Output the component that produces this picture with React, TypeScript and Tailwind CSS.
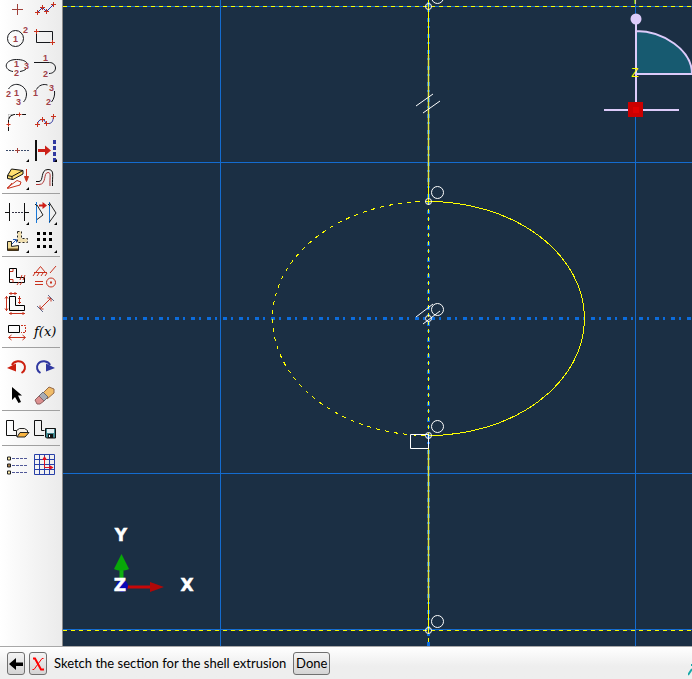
import type { ReactNode } from "react";

interface Tool {
  label: string;
  icon: ReactNode;
  menu?: boolean;
}

const RED = "#c8321e";
const RUST = "#a0403a";
const INK = "#16181c";
const BLUE = "#3038a0";

function Plus({ x, y, r = 2, color = RED }: { x: number; y: number; r?: number; color?: string }) {
  return <path d={`M${x - r} ${y}h${r * 2}M${x} ${y - r}v${r * 2}`} stroke={color} />;
}

function Num({ x, y, children }: { x: number; y: number; children: ReactNode }) {
  return (
    <text
      x={x}
      y={y}
      className="fill-[#a04048] font-['Liberation_Sans',sans-serif] text-[9px] font-bold"
      stroke="none"
    >
      {children}
    </text>
  );
}

const groups: Tool[][] = [
  [
    { label: "Create isolated point", icon: <Plus x={14.5} y={13.5} r={5.5} color={RUST} /> },
    {
      label: "Create connected lines",
      icon: (
        <>
          <path d="M6.5 16.5L11.5 11.5L15.5 15.5L22.5 8.5" stroke={BLUE} />
          <Plus x={6.5} y={16.5} r={2.5} />
          <Plus x={11.5} y={11.5} r={2.5} />
          <Plus x={15.5} y={15.5} r={2.5} />
          <Plus x={22.5} y={8.5} r={2.5} />
        </>
      ),
    },
    {
      label: "Create circle",
      icon: (
        <>
          <circle cx="12.5" cy="14.5" r="8" stroke={INK} />
          <Num x={10} y={18}>1</Num>
          <Num x={20} y={9}>2</Num>
        </>
      ),
    },
    {
      label: "Create rectangle",
      icon: (
        <>
          <path d="M5.5 7.5h16v11h-16z" stroke={INK} />
          <Plus x={5.5} y={7.5} r={2.5} />
          <Plus x={21.5} y={18.5} r={2.5} />
        </>
      ),
    },
    {
      label: "Create ellipse",
      icon: (
        <>
          <path d="M10 19.5C0 18 1 7.5 13.5 7.5C20 7.5 23 9.5 24 11M17 19.5C20 19 22 18 23 17" stroke={INK} />
          <Num x={11} y={15}>1</Num>
          <Num x={11} y={24}>2</Num>
          <Num x={21} y={17}>3</Num>
        </>
      ),
    },
    {
      label: "Create tangent arc",
      icon: (
        <>
          <path d="M3 10.5H18.5C22 10.5 24.5 13 24.5 16C24.5 19 22 21.5 18 21.5" stroke={INK} />
          <Num x={12} y={9}>1</Num>
          <Num x={12} y={25}>2</Num>
        </>
      ),
    },
    {
      label: "Create arc by center",
      icon: (
        <>
          <path d="M5.5 9C8 5 12 4 15 4.5C20 5.5 23.5 9.5 23.5 14C23.5 17 22.5 20 20.5 22" stroke={INK} />
          <Num x={3} y={17}>2</Num>
          <Num x={11} y={16}>1</Num>
          <Num x={13} y={25}>3</Num>
        </>
      ),
    },
    {
      label: "Create arc by 3 points",
      icon: (
        <>
          <path d="M5.5 9.5C7.5 5.5 12 3.5 16.5 5M23.5 11C24 15 23 19 20.5 22" stroke={INK} />
          <Num x={2} y={16}>1</Num>
          <Num x={18} y={11}>3</Num>
          <Num x={15} y={25}>2</Num>
        </>
      ),
    },
    {
      label: "Create fillet",
      icon: (
        <>
          <path d="M5.5 10.5v-4h4" stroke="#aaa" strokeDasharray="2 1" />
          <path d="M5.5 11.5Q6.5 7 11 6.5H23" stroke="#111" strokeDasharray="9 1 4 2" />
          <path d="M5.5 12v11" stroke="#111" strokeDasharray="6 1" />
          <Plus x={16.5} y={6.5} />
          <Plus x={5.5} y={16.5} />
        </>
      ),
    },
    {
      label: "Create spline",
      icon: (
        <>
          <path d="M6.5 16.5Q7 11.5 11.5 11.5C15 11.5 13 15.5 16.5 15.5C21 16 22 13 22.5 8.5" stroke={BLUE} />
          <Plus x={6.5} y={16.5} r={2.5} />
          <Plus x={11.5} y={11.5} r={2.5} />
          <Plus x={15.5} y={15.5} r={2.5} />
          <Plus x={22.5} y={8.5} r={2.5} />
        </>
      ),
    },
    {
      label: "Create construction line",
      menu: true,
      icon: (
        <>
          <path d="M3 14.5h24" stroke="#3a4a6a" strokeDasharray="2 1" />
          <Plus x={14.5} y={14.5} r={2.5} color={RUST} />
        </>
      ),
    },
    {
      label: "Project edges",
      menu: true,
      icon: (
        <>
          <path d="M5 4v21" stroke="#111" strokeWidth="2" />
          <path d="M7 14.5h8" stroke="#cc2018" strokeWidth="3" />
          <path d="M14 9.5l6 5l-6 5z" fill="#cc2018" />
          <path d="M23.5 4v22" stroke={BLUE} strokeWidth="3" strokeDasharray="4 2" />
        </>
      ),
    },
    {
      label: "Offset curves",
      menu: true,
      icon: (
        <>
          <path d="M4.5 11.5L8.5 5L20 6.5V10L10 15.5L4.5 14.5z" fill="#ffe070" stroke="#111" />
          <path d="M4.5 11.5L9 12.5L20 6.5M9 12.5v3" stroke="#111" />
          <path d="M4 24L14 16.5L18 18L17 21L4.5 24.5L9 19" stroke={RED} />
          <path d="M23.5 5v9M21.5 12.5h4l-2 5z" fill={RED} stroke={RED} />
        </>
      ),
    },
    {
      label: "Offset wire",
      icon: (
        <>
          <path d="M5 17.5H8C13 17.5 9 5.5 17 5.5C24 5.5 21 12 21.5 22" stroke="#111" />
          <path d="M5 20.5H8C16 20.5 12 8.5 17 8.5C20.5 8.5 18.5 13 19 22" stroke="#b03838" />
        </>
      ),
    },
  ],
  [
    {
      label: "Auto-trim",
      menu: true,
      icon: (
        <>
          <path d="M6.5 4v18M21.5 4v18M2 13.5h5M21 13.5h5" stroke="#111" />
          <path d="M9 13.5h11" stroke="#334" strokeDasharray="2 1" />
        </>
      ),
    },
    {
      label: "Mirror and copy",
      menu: true,
      icon: (
        <>
          <path d="M5.5 3v21M18.5 3v21" stroke="#1878d8" />
          <path d="M6 6L12 16L6 20.5M18.5 4L25 14L18.5 23M4 5l2 2M17 5l2 2" stroke="#222" />
          <path d="M8 6.5h4" stroke="#d02018" strokeWidth="2" />
          <path d="M11.5 3l4.5 3.5l-4.5 3.5z" fill="#d02018" />
        </>
      ),
    },
    {
      label: "Linear move",
      menu: true,
      icon: (
        <>
          <path d="M14.5 4.5h4v7h6v4h-10z" fill="#f0dfb0" stroke="#222" strokeDasharray="2 2" />
          <path d="M4.5 14.5h4v5l7-1v5h-11z" fill="#f0dc98" stroke="#222" />
          <path d="M5 22.5h10" stroke="#604010" strokeWidth="2" />
          <path d="M9 17l4-4M10 12.5h3.5v3" stroke="#2858a8" />
        </>
      ),
    },
    {
      label: "Linear pattern",
      menu: true,
      icon: (
        <path
          d="M6 5h3v3h-3zM12 5h3v3h-3zM18 5h3v3h-3zM6 11h3v3h-3zM12 11h3v3h-3zM18 11h3v3h-3zM6 18h3v3h-3zM12 18h3v3h-3zM18 18h3v3h-3z"
          fill="#000"
        />
      ),
    },
  ],
  [
    {
      label: "Add constraint",
      icon: (
        <>
          <path d="M6.5 6.5h7v9h8v5h-15z" stroke="#000" />
          <path d="M7 9.5h3V7M7 17.5h3v3M16 20l-2 3M19 20l-2 3M19 13l-2 5M22 13l-2 5" stroke={RED} />
        </>
      ),
    },
    {
      label: "Auto-constrain",
      icon: (
        <>
          <path
            d="M3 10.5h13M5 10L9.5 4.5L14 10M4 11l-2 3M8 11l-2 3M12 11l-2 3M16 11l-2 3M19 11l6-7M4 19.5h8M4 22.5h8"
            stroke={RED}
          />
          <circle cx="20" cy="20.5" r="4.5" stroke={RED} />
          <path d="M19 19.5h2v2h-2z" fill={RED} />
        </>
      ),
    },
    {
      label: "Auto-dimension",
      icon: (
        <>
          <path d="M6.5 6.5h6v9h9v5h-15z" stroke="#000" />
          <path
            d="M3.5 6v15M2 8.5l1.5-2l1.5 2M2 18.5l1.5 2l1.5-2M6 3.5h8M8 2v3M12 2v3M16.5 6v8M15 8.5h3M15 12.5h3M6 23.5h16M8 22v3M20 22v3"
            stroke={RED}
          />
        </>
      ),
    },
    {
      label: "Add dimension",
      icon: (
        <>
          <path d="M9 19L20 8M9 15.5V19H12.5M16.5 8H20V11.5" stroke={RED} />
          <path d="M6 16l6 6M17 5l6 6" stroke="#60688c" />
        </>
      ),
    },
    {
      label: "Edit dimension value",
      icon: (
        <>
          <path d="M5.5 7.5h11v7h-11z" stroke="#000" />
          <path d="M18 7.5h4.5v7H18" stroke={RED} strokeDasharray="2 1" />
          <path d="M6 19.5h16M8.5 17l-3 2.5l3 2.5M19.5 17l3 2.5l-3 2.5" stroke={RED} />
        </>
      ),
    },
    {
      label: "Parameter manager",
      icon: (
        <text x="3" y="18" className="fill-black font-['DejaVu_Serif',serif] text-[13px] italic" stroke="none">
          f(x)
        </text>
      ),
    },
  ],
  [
    {
      label: "Undo",
      icon: (
        <>
          <path d="M9 12C11 7.5 18 7 21 11C23 14 22 18 18.5 20" stroke="#cc2010" strokeWidth="2" />
          <path d="M4 15L13 10.5V18.5z" fill="#cc2010" />
        </>
      ),
    },
    {
      label: "Redo",
      icon: (
        <>
          <path d="M19 12C17 7.5 10 7 7 11C5 14 6 18 9.5 20" stroke={BLUE} strokeWidth="2" />
          <path d="M24 15L15 10.5V18.5z" fill={BLUE} />
        </>
      ),
    },
    {
      label: "Select",
      icon: <path d="M9 6V19L12 16L15.5 22L18 21L15 14.5H19z" fill="#000" />,
    },
    {
      label: "Delete",
      icon: (
        <>
          <path d="M12 12L18 6L23 8V12L16 18z" fill="#f0bc68" stroke="#946848" />
          <path d="M8 15L12 11L17 16L13 20z" fill="#a8acb4" stroke="#686c74" />
          <path d="M4 19L8 15L13 20L9 23H6z" fill="#dc9090" stroke="#906060" />
        </>
      ),
    },
  ],
  [
    {
      label: "Open sketch",
      icon: (
        <>
          <path d="M13 19.5H3.5v-15h7v10h3" stroke="#111" />
          <path d="M13.5 20.5v-6l3-2h5l3 2v3" fill="#f4f0e8" stroke="#222" />
          <path d="M14 21L17 16.5H26L22 21z" fill="#f8b440" stroke="#222" />
        </>
      ),
    },
    {
      label: "Save sketch",
      icon: (
        <>
          <path d="M13 19.5H3.5v-15h7v10h3" stroke="#111" />
          <path d="M14.5 12.5H24.5V22H15.5L14.5 21z" fill="#408890" stroke="#111" />
          <path d="M16 13h7v4h-7z" fill="#e4f0f4" />
          <path d="M17 18h5v4h-5z" fill="#111" />
          <path d="M18 19h1v2h-1z" fill="#fff" />
        </>
      ),
    },
  ],
  [
    {
      label: "Sketcher options",
      icon: (
        <>
          <path d="M9 7.5h16M9 14.5h16M9 21.5h16" stroke="#505898" strokeDasharray="3 1" />
          <path d="M4.5 6h3v3h-3zM4.5 20h3v3h-3z" fill="#fff0b0" stroke="#222" />
          <path d="M4.5 13h3v3h-3z" fill="#a88050" stroke="#222" />
        </>
      ),
    },
    {
      label: "Grid settings",
      icon: (
        <>
          <path
            d="M3.5 3.5h20v20h-20zM8.5 3v20M13.5 3v20M18.5 3v20M3 8.5h20M3 13.5h20M3 18.5h20"
            stroke="#2840a8"
          />
          <path d="M13.5 7V16.5H20.5M12 8.5h3M19.5 15v3" stroke="#e01020" />
          <path d="M13.5 5L16 9H11zM22.5 16.5L18.5 14V19z" fill="#e01020" />
        </>
      ),
    },
  ],
];

function ToolButton({ label, icon, menu }: Tool) {
  return (
    <button type="button" aria-label={label} title={label} className="size-7 hover:bg-white">
      <svg viewBox="0 0 28 28" fill="none" className="block size-7">
        {icon}
        {menu && <path d="M26 23v3h-3z" fill="#000" />}
      </svg>
    </button>
  );
}

function Toolbox() {
  return (
    <nav
      aria-label="Sketch tools"
      className="w-[63px] shrink-0 overflow-hidden border-r border-[#8c8c8c] bg-linear-to-r from-white to-[#ebebeb]"
    >
      <div className="-mt-1">
        {groups.map((tools, i) => (
          <div key={i}>
            {i > 0 && <hr className="mx-[2px] mt-px mb-[5px] border-[#a0a0a0]" />}
            <div className="ml-[3px] grid w-14 grid-cols-2">
              {tools.map((t) => (
                <ToolButton key={t.label} {...t} />
              ))}
            </div>
          </div>
        ))}
      </div>
    </nav>
  );
}

// vertices of the profile along the vertical axis
const vertices = [6.5, 201.5, 318.5, 435.5, 630.5];

function Viewport() {
  return (
    <svg className="block size-full" fill="none" role="img" aria-label="Sketch viewport">
      <g stroke="#146cd0" shapeRendering="crispEdges">
        <line x1="0" x2="100%" y1="6.5" y2="6.5" />
        <line x1="0" x2="100%" y1="162.5" y2="162.5" />
        <line x1="0" x2="100%" y1="473.5" y2="473.5" />
        <line x1="0" x2="100%" y1="629.5" y2="629.5" />
        <line x1="157.5" x2="157.5" y1="0" y2="100%" />
        <line x1="572.5" x2="572.5" y1="0" y2="100%" />
      </g>
      <g stroke="#0c6cdc" strokeWidth="3" strokeDasharray="4 4 2 6" shapeRendering="crispEdges">
        <line x1="0" x2="100%" y1="318.5" y2="318.5" />
        <line x1="365.5" x2="365.5" y1="2" y2="100%" />
      </g>

      <g stroke="#ffff00" shapeRendering="crispEdges">
        <line x1="0" x2="100%" y1="6.5" y2="6.5" strokeDasharray="4 4" />
        <line x1="0" x2="100%" y1="630.5" y2="630.5" strokeDasharray="4 4" />
        <line x1="365.5" x2="365.5" y1="201" y2="435" strokeDasharray="4 4" />
        <line x1="365.5" x2="365.5" y1="630" y2="100%" strokeDasharray="4 4" />
        <path d="M365.5 0V201M365.5 435V630" />
        <path d="M365.5 201.5A156 117 0 0 1 365.5 435.5" />
        <path d="M365.5 201.5A156 117 0 0 0 365.5 435.5" strokeDasharray="4 5" />
      </g>
      <path d="M365.5 55V185M365.5 450V600" stroke="#c8d070" strokeWidth="2" strokeOpacity="0.5" />

      <g stroke="#fff">
        {vertices.map((y) => (
          <g key={y}>
            <circle cx="365.5" cy={y} r="3" />
            <circle cx="374.5" cy={y - 9} r="6" />
          </g>
        ))}
        <path d="M353 106L370 94M360 113L377 101M353 317L370 304M360 324L377 311" />
        <path d="M347.5 434.5h18v14h-18z" />
      </g>

      {/* view orientation compass */}
      <path d="M573 31C600 31 629 50 629 74H573z" fill="#175a70" />
      <path d="M573 19V110M541 110H616M573 74H629M573 31C600 31 629 50 629 74" stroke="#dccbfa" strokeWidth="2" />
      <circle cx="573" cy="19" r="5.5" fill="#dccbfa" />
      <path d="M565 102h15v15h-15z" fill="#cc0000" />
      <path d="M570 107h6v6h-6z" fill="#e00000" />
      <g className="fill-[#ffff00] font-['Liberation_Sans',sans-serif] text-[12px]" textAnchor="middle">
        <text x="572" y="77">Z</text>
        <text x="572" y="4">Y</text>
      </g>

      {/* axis triad */}
      <path d="M58.5 587V567" stroke="#10b010" strokeWidth="4" />
      <path d="M58.5 554L66 569C62 571 55 571 51 569z" fill="#08a808" />
      <path d="M64 587H90" stroke="#c80808" strokeWidth="3" />
      <path d="M101 587L87 582V592z" fill="#b00808" />
      <circle cx="59" cy="586" r="6" fill="#0808b8" />
      <g
        className="fill-white stroke-white font-['DejaVu_Sans',sans-serif] text-[17px] font-bold"
        strokeWidth="0.5"
        textAnchor="middle"
      >
        <text x="58" y="541">Y</text>
        <text x="57" y="591">Z</text>
        <text x="124" y="591">X</text>
      </g>
    </svg>
  );
}

function PromptBar() {
  const button =
    "flex h-[23px] items-center justify-center rounded-[3px] border border-[#707070] bg-linear-to-b from-[#f4f4f4] to-[#d4d4d4]";

  return (
    <footer className="flex h-[33px] shrink-0 items-center gap-1 overflow-hidden border-t border-[#a8a8a8] bg-linear-to-b from-white to-[#eeeeee] to-60% pt-px pl-[7px] font-['Lato','Noto_Sans',sans-serif] text-[13px] text-black">
      <button type="button" aria-label="Previous step" className={`${button} w-[18px]`}>
        <svg viewBox="0 0 16 16" className="size-4 shrink-0">
          <path d="M1 8L8 2V6.5H15V10H8V14z" fill="#000" />
        </svg>
      </button>
      <button type="button" aria-label="Cancel procedure" className={`${button} w-[18px]`}>
        <svg viewBox="0 0 16 16" className="size-4 shrink-0" fill="none" stroke="#f00">
          <path d="M3 2.5H5L11 13.5H14" strokeWidth="2" />
          <path d="M13.5 2.5H12L4 13.5H2.5" />
        </svg>
      </button>
      <span className="ml-[3px] whitespace-nowrap">Sketch the section for the shell extrusion</span>
      <button type="button" className={`${button} ml-[3px] w-[37px]`}>
        Done
      </button>
      <svg viewBox="0 0 4 12" className="mt-3 ml-auto h-3 w-1">
        <path d="M0 11L4 5M3 1h1" stroke="#18a8a8" strokeWidth="2" fill="none" />
      </svg>
    </footer>
  );
}

export default function App() {
  return (
    <div className="flex h-screen flex-col overflow-hidden bg-white">
      <div className="flex min-h-0 flex-1">
        <Toolbox />
        <main className="min-w-0 flex-1 bg-[#1b2f44]">
          <Viewport />
        </main>
      </div>
      <PromptBar />
    </div>
  );
}
